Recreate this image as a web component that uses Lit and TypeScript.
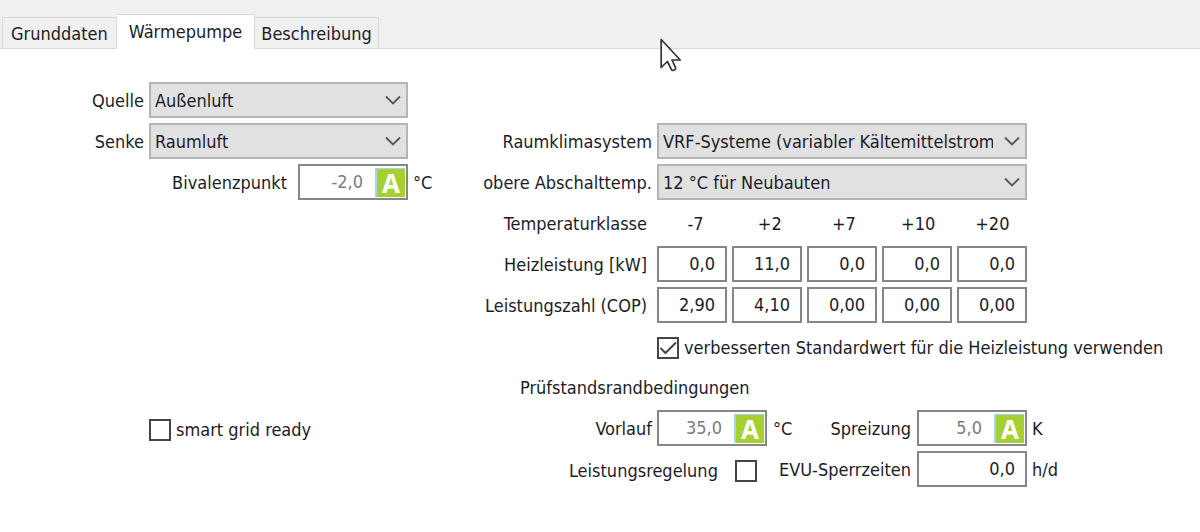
import { LitElement, html, css, svg } from "lit";
import { customElement, property, state } from "lit/decorators.js";
import { classMap } from "lit/directives/class-map.js";

const controlStyles = css`
  :host {
    display: block;
    min-width: 0;
  }
  * {
    box-sizing: border-box;
  }
  input,
  select,
  button {
    font: inherit;
    color: inherit;
    margin: 0;
    border-radius: 0;
  }
`;

/** Drop-down with a flat grey face. */
@customElement("select-field")
export class SelectField extends LitElement {
  @property() name = "";
  @property({ attribute: false }) options: string[] = [];

  static styles = [
    controlStyles,
    css`
      .box {
        display: grid;
        align-items: center;
      }
      select {
        grid-area: 1 / 1;
        appearance: none;
        width: 100%;
        height: 36px;
        padding: 1px 32px 0 4px;
        border: 2px solid #b4b4b4;
        background: #e1e1e1;
        overflow: hidden;
      }
      svg {
        grid-area: 1 / 1;
        justify-self: end;
        width: 16px;
        height: 10px;
        margin-right: 7px;
        pointer-events: none;
      }
    `,
  ];

  render() {
    return html`<div class="box">
      <select aria-label=${this.name}>
        ${this.options.map((o) => html`<option>${o}</option>`)}
      </select>
      <svg viewBox="0 0 16 10" fill="none" stroke="#555" stroke-width="1.8">
        <path d="M1 1.500 8 8.500l7-7" />
      </svg>
    </div>`;
  }
}

/** Right-aligned number box, with an optional "A" (automatic) button. */
@customElement("number-field")
export class NumberField extends LitElement {
  @property() name = "";
  @property() value = "";
  @property({ type: Boolean }) auto = false;

  static styles = [
    controlStyles,
    css`
      .box {
        display: grid;
        align-items: center;
      }
      input {
        grid-area: 1 / 1;
        width: 100%;
        height: 36px;
        padding: 0 10px 1px 2px;
        border: 2px solid #868686;
        background: #fff;
        text-align: right;
      }
      .auto input {
        padding-right: 43px;
        color: #7c7c7c;
      }
      button {
        grid-area: 1 / 1;
        justify-self: end;
        width: 30px;
        height: 29px;
        margin-right: 3px;
        padding: 0;
        border: 0 solid #9fd8f5;
        border-width: 1px 0 0 2px;
        background: #a6d02f;
        color: #fff;
        font: bold 26px/28px "Noto Sans", "Open Sans", sans-serif;
      }
    `,
  ];

  render() {
    return html`<div class=${classMap({ box: true, auto: this.auto })}>
      <input type="text" aria-label=${this.name} .value=${this.value} />
      ${this.auto
        ? html`<button type="button" aria-label="${this.name} automatisch">A</button>`
        : null}
    </div>`;
  }
}

/** Square tick box with its text, before or after the box. */
@customElement("check-field")
export class CheckField extends LitElement {
  @property() text = "";
  @property({ type: Boolean }) checked = false;
  @property({ type: Boolean }) before = false;

  static styles = [
    controlStyles,
    css`
      label {
        display: flex;
        align-items: center;
        gap: 5px;
        padding-top: 4px;
        white-space: nowrap;
      }
      .before {
        flex-direction: row-reverse;
        gap: 17px;
      }
      .box {
        display: grid;
      }
      input {
        grid-area: 1 / 1;
        appearance: none;
        width: 22px;
        height: 22px;
        border: 2px solid #444;
        background: #fff;
      }
      svg {
        grid-area: 1 / 1;
        width: 22px;
        height: 22px;
        visibility: hidden;
        pointer-events: none;
      }
      input:checked + svg {
        visibility: visible;
      }
    `,
  ];

  render() {
    return html`<label class=${classMap({ before: this.before })}>
      <span class="box">
        <input type="checkbox" .checked=${this.checked} />
        <svg viewBox="0 0 22 22" fill="none" stroke="#444" stroke-width="2">
          <path d="M3.500 11l5 5L19 5.500" />
        </svg>
      </span>
      <span>${this.text}</span>
    </label>`;
  }
}

const TABS = ["Grunddaten", "Wärmepumpe", "Beschreibung"];
const CLASSES = ["-7", "+2", "+7", "+10", "+20"];
const POWER = ["0,0", "11,0", "0,0", "0,0", "0,0"];
const COP = ["2,90", "4,10", "0,00", "0,00", "0,00"];

const pointer = svg`<path
  d="M1.200 1.500v28l6.200-6 4.200 8.300c1.500 1.500 4.500 0 4-2.200l-3.600-7.600h8.200z"
  fill="#fff" stroke="#33323f" stroke-width="1.700" stroke-linejoin="round" />`;

@customElement("app-root")
export class AppRoot extends LitElement {
  @state() private active = 1;

  static styles = css`
    :host {
      display: block;
      position: relative;
      min-height: 100vh;
      background: #fff;
      color: #1c1c28;
      font: 18px/24px "DejaVu Sans Condensed", "Noto Sans", sans-serif;
    }
    * {
      box-sizing: border-box;
    }
    .tabs {
      display: flex;
      align-items: flex-end;
      height: 49px;
      padding: 0 2px;
      background: #f0f0f0;
      box-shadow: inset 0 -1px #d9d9d9;
    }
    .tab {
      height: 32px;
      margin: 0;
      padding: 2px 8px 0;
      border: 1px solid #d9d9d9;
      border-radius: 0;
      background: #f0f0f0;
      color: inherit;
      font: inherit;
    }
    .tab + .tab {
      border-left-width: 0;
      padding: 2px 6px 0;
    }
    .tab.active {
      height: 35px;
      padding: 0 12px;
      border-bottom-color: #fff;
      background: #fff;
    }
    .form {
      display: grid;
      grid-template-columns: 144fr 259fr 30fr 204fr 370fr 168fr;
      grid-auto-rows: 36px;
      gap: 5px;
      align-items: center;
      padding: 33px 0;
      white-space: nowrap;
    }
    .label {
      justify-self: end;
    }
    span {
      padding-top: 1px;
    }
    .inset {
      padding-right: 5px;
    }
    .c1 {
      grid-column: 1;
    }
    .c2 {
      grid-column: 2;
    }
    .c4 {
      grid-column: 4;
    }
    .wide {
      grid-column: 5 / 7;
    }
    .heading {
      grid-column: 4 / 6;
      padding-left: 72px;
    }
    .end {
      display: flex;
      align-items: center;
      justify-content: flex-end;
      gap: 11px;
    }
    .pair {
      display: flex;
      align-items: center;
      gap: 6px;
    }
    .split {
      justify-content: space-between;
    }
    .both {
      grid-column: 4 / 6;
      justify-content: flex-end;
      gap: 22px;
    }
    .short {
      width: 110px;
    }
    .five {
      display: grid;
      grid-template-columns: repeat(5, 1fr);
      gap: 5px;
    }
    .heads {
      padding-left: 4px;
      text-align: center;
    }
    .pointer {
      position: absolute;
      left: 660px;
      top: 38px;
      width: 22px;
      height: 34px;
      pointer-events: none;
    }
  `;

  private five(name: string, values: string[]) {
    return html`<div class="five" role="group" aria-label=${name}>
      ${values.map(
        (v, i) => html`<number-field .name="${name} ${CLASSES[i]}" .value=${v}></number-field>`
      )}
    </div>`;
  }

  render() {
    return html`
      <div class="tabs" role="tablist">
        ${TABS.map(
          (t, i) => html`<button
            type="button"
            role="tab"
            class=${classMap({ tab: true, active: i === this.active })}
            aria-selected=${i === this.active}
            @click=${() => (this.active = i)}
          >${t}</button>`
        )}
      </div>
      <form class="form">
        <span class="label c1">Quelle</span>
        <select-field name="Quelle" .options=${["Außenluft"]}></select-field>

        <span class="label c1">Senke</span>
        <select-field name="Senke" .options=${["Raumluft"]}></select-field>
        <span class="label c4">Raumklimasystem</span>
        <select-field
          name="Raumklimasystem"
          .options=${["VRF-Systeme (variabler Kältemittelstrom)"]}
        ></select-field>

        <div class="c2 end">
          <span>Bivalenzpunkt</span>
          <number-field class="short" name="Bivalenzpunkt" value="-2,0" auto></number-field>
        </div>
        <span>°C</span>
        <span class="label c4">obere Abschalttemp.</span>
        <select-field
          name="obere Abschalttemperatur"
          .options=${["12 °C für Neubauten"]}
        ></select-field>

        <span class="label c4 inset">Temperaturklasse</span>
        <div class="five heads">${CLASSES.map((c) => html`<span>${c}</span>`)}</div>

        <span class="label c4 inset">Heizleistung [kW]</span>
        ${this.five("Heizleistung", POWER)}

        <span class="label c4 inset">Leistungszahl (COP)</span>
        ${this.five("Leistungszahl", COP)}

        <check-field
          class="wide"
          text="verbesserten Standardwert für die Heizleistung verwenden"
          checked
        ></check-field>

        <span class="heading">Prüfstandsrandbedingungen</span>

        <check-field class="c2" text="smart grid ready"></check-field>
        <span class="label c4">Vorlauf</span>
        <div class="pair split">
          <div class="pair">
            <number-field class="short" name="Vorlauf" value="35,0" auto></number-field>
            <span>°C</span>
          </div>
          <div class="pair">
            <span>Spreizung</span>
            <number-field class="short" name="Spreizung" value="5,0" auto></number-field>
          </div>
        </div>
        <span>K</span>

        <div class="pair both">
          <check-field text="Leistungsregelung" before></check-field>
          <div class="pair">
            <span>EVU-Sperrzeiten</span>
            <number-field class="short" name="EVU-Sperrzeiten" value="0,0"></number-field>
          </div>
        </div>
        <span>h/d</span>
      </form>
      <svg class="pointer" viewBox="0 0 22 34" aria-hidden="true">${pointer}</svg>
    `;
  }
}
